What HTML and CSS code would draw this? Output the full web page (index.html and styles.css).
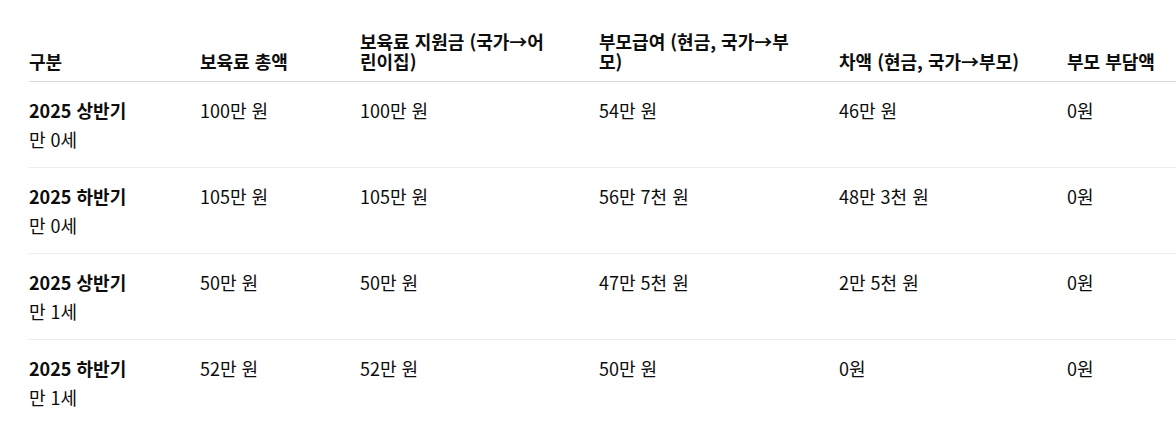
FILE: index.html
```html
<!DOCTYPE html>
<html lang="ko">
<head>
<meta charset="utf-8">
<link rel="stylesheet" href="styles.css">
</head>
<body>
<div class="wrap">
<table class="tbl">
<colgroup>
<col class="c1"><col class="c2"><col class="c3"><col class="c4"><col class="c5"><col class="c6">
</colgroup>
<thead>
<tr>
<th>구분</th>
<th>보육료 총액</th>
<th>보육료 지원금 (국가→어린이집)</th>
<th>부모급여 (현금, 국가→부모)</th>
<th>차액 (현금, 국가→부모)</th>
<th>부모 부담액</th>
</tr>
</thead>
<tbody>
<tr>
<td><strong>2025 상반기</strong><br>만 0세</td>
<td>100만 원</td><td>100만 원</td><td>54만 원</td><td>46만 원</td><td>0원</td>
</tr>
<tr>
<td><strong>2025 하반기</strong><br>만 0세</td>
<td>105만 원</td><td>105만 원</td><td>56만 7천 원</td><td>48만 3천 원</td><td>0원</td>
</tr>
<tr>
<td><strong>2025 상반기</strong><br>만 1세</td>
<td>50만 원</td><td>50만 원</td><td>47만 5천 원</td><td>2만 5천 원</td><td>0원</td>
</tr>
<tr>
<td><strong>2025 하반기</strong><br>만 1세</td>
<td>52만 원</td><td>52만 원</td><td>50만 원</td><td>0원</td><td>0원</td>
</tr>
</tbody>
</table>
</div>
</body>
</html>
```
FILE: styles.css
```css
html, body {
  margin: 0;
  padding: 0;
  background: #ffffff;
  overflow: hidden;
}
body {
  font-family: "Noto Sans CJK KR", "Noto Sans", sans-serif;
  font-size: 18px;
  color: #0d0d0d;
}
.wrap {
  padding: 23px 0 0 29px;
}
.tbl {
  border-collapse: collapse;
  table-layout: fixed;
  width: 1147px;
}
.c1 { width: 171px; }
.c2 { width: 160px; }
.c3 { width: 239px; }
.c4 { width: 240px; }
.c5 { width: 228px; }
.c6 { width: 109px; }
.tbl th {
  text-align: left;
  vertical-align: bottom;
  font-weight: 700;
  line-height: 20px;
  padding: 8px 42px 10px 0;
  border-bottom: 1px solid #d9d9d9;
}
.tbl th:last-child {
  padding-right: 0;
}
.tbl td {
  text-align: left;
  vertical-align: top;
  line-height: 29px;
  padding: 14px 24px 13px 0;
  border-bottom: 1px solid #ececec;
}
.tbl tbody tr:last-child td {
  border-bottom: none;
}
.tbl strong {
  font-weight: 700;
}
```
